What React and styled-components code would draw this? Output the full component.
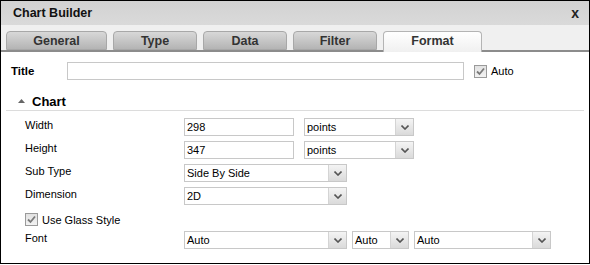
import React from "react";
import styled, { createGlobalStyle } from "styled-components";

const Global = createGlobalStyle`
  html, body { margin: 0; padding: 0; background: #fff; }
  body { font-family: "Liberation Sans", Arial, sans-serif; font-size: 11px; color: #000; }
`;

const Window = styled.div`
  box-sizing: border-box;
  width: 590px;
  height: 264px;
  border: 1px solid #000;
  display: flex;
  flex-direction: column;
  background: #fff;
  overflow: hidden;
`;

const TitleBar = styled.div`
  height: 24px;
  flex: none;
  display: flex;
  align-items: center;
  justify-content: space-between;
  padding: 0 10px 0 12px;
  background: linear-gradient(#d2d2d2, #dadada);
  font-weight: bold;
  font-size: 12.5px;
  color: #111;
`;

const Close = styled.span`
  font-size: 14px;
  font-weight: bold;
  color: #222;
  line-height: 1;
`;

const TabStrip = styled.div`
  height: 27px;
  flex: none;
  display: flex;
  align-items: flex-end;
  gap: 6px;
  padding-left: 5px;
  background: #f0f0f0;
  border-bottom: 2px solid #8c8c8c;
  box-sizing: border-box;
`;

const Tab = styled.div`
  box-sizing: border-box;
  width: ${({ w }) => w}px;
  height: ${({ active }) => (active ? 21 : 19)}px;
  margin-bottom: ${({ active }) => (active ? -2 : 0)}px;
  display: flex;
  align-items: center;
  justify-content: center;
  border: 1px solid ${({ active }) => (active ? "#b4b4b4" : "#a8a8a8")};
  border-bottom: ${({ active }) => (active ? "none" : "1px solid #a8a8a8")};
  border-radius: 4px 4px 0 0;
  background: ${({ active }) =>
    active
      ? "linear-gradient(#ffffff, #f0f0f0)"
      : "linear-gradient(#d8d8d8, #b4b4b4)"};
  font-weight: bold;
  font-size: 12.5px;
  color: #333;
  padding-bottom: ${({ active }) => (active ? 2 : 0)}px;
`;

const Body = styled.div`
  padding: 10px 0 0 9px;
  display: flex;
  flex-direction: column;
`;

const TitleRow = styled.div`
  display: flex;
  align-items: center;
  height: 18px;
`;

const BoldLabel = styled.div`
  width: 56px;
  font-weight: bold;
  font-size: 11.5px;
  padding-left: 1px;
`;

const TextBox = styled.div`
  box-sizing: border-box;
  width: ${({ w }) => w}px;
  height: 18px;
  border: 1px solid #c8c8c8;
  background: #fff;
  display: flex;
  align-items: center;
  padding-left: 2px;
  font-size: 11px;
`;

const CheckWrap = styled.label`
  display: flex;
  align-items: center;
  gap: 4px;
  margin-left: ${({ ml }) => ml || 0}px;
  font-size: 11px;
`;

const Box = styled.span`
  box-sizing: border-box;
  width: 13px;
  height: 13px;
  border: 1px solid #9a9a9a;
  background: linear-gradient(#e2e2e2, #f2f2f2);
  display: flex;
  align-items: center;
  justify-content: center;
`;

const SectionHead = styled.div`
  margin: 12px 5px 0 -4px;
  height: 18px;
  display: flex;
  align-items: center;
  gap: 7px;
  padding-left: 12px;
  border-bottom: 1px solid #dcdcdc;
  font-weight: bold;
  font-size: 13px;
`;

const Rows = styled.div`
  display: flex;
  flex-direction: column;
  gap: 5px;
  padding: 7px 0 0 15px;
`;

const Row = styled.div`
  display: flex;
  align-items: ${({ bottom }) => (bottom ? "flex-end" : "center")};
  height: ${({ h }) => h || 18}px;
`;

const Label = styled.div`
  width: 159px;
  font-size: 11px;
  margin-top: -4px;
`;

const Controls = styled.div`
  display: flex;
  align-items: center;
  gap: ${({ gap }) => gap || 0}px;
`;

const Select = styled.div`
  box-sizing: border-box;
  width: ${({ w }) => w}px;
  height: 18px;
  border: 1px solid #c8c8c8;
  background: #fff;
  display: flex;
  align-items: stretch;
`;

const SelectText = styled.div`
  flex: 1;
  display: flex;
  align-items: center;
  padding-left: 2px;
  font-size: 11px;
`;

const Arrow = styled.div`
  width: 17px;
  border-left: 1px solid #d4d4d4;
  background: linear-gradient(#f4f4f4, #dadada);
  display: flex;
  align-items: center;
  justify-content: center;
`;

const Check = () => (
  <Box>
    <svg width="9" height="9" viewBox="0 0 9 9">
      <path d="M1 4.5 L3.5 7 L8 1.5" fill="none" stroke="#7a7a7a" strokeWidth="1.8" />
    </svg>
  </Box>
);

const Dropdown = ({ w, value }) => (
  <Select w={w}>
    <SelectText>{value}</SelectText>
    <Arrow>
      <svg width="8" height="5" viewBox="0 0 8 5">
        <path d="M0.5 0.5 L4 4 L7.5 0.5" fill="none" stroke="#555" strokeWidth="1.6" />
      </svg>
    </Arrow>
  </Select>
);

const tabs = [
  { name: "General", w: 101 },
  { name: "Type", w: 84 },
  { name: "Data", w: 84 },
  { name: "Filter", w: 84 },
  { name: "Format", w: 99, active: true },
];

export default function App() {
  return (
    <>
      <Global />
      <Window>
        <TitleBar>
          <span>Chart Builder</span>
          <Close>x</Close>
        </TitleBar>
        <TabStrip>
          {tabs.map((t) => (
            <Tab key={t.name} w={t.w} active={t.active}>
              {t.name}
            </Tab>
          ))}
        </TabStrip>
        <Body>
          <TitleRow>
            <BoldLabel>Title</BoldLabel>
            <TextBox w={397} />
            <CheckWrap ml={10}>
              <Check />
              Auto
            </CheckWrap>
          </TitleRow>
          <SectionHead>
            <svg width="7" height="4" viewBox="0 0 7 4">
              <path d="M0 4 L3.5 0 L7 4 Z" fill="#666" />
            </svg>
            Chart
          </SectionHead>
          <Rows>
            <Row>
              <Label>Width</Label>
              <Controls gap={10}>
                <TextBox w={110}>298</TextBox>
                <Dropdown w={110} value="points" />
              </Controls>
            </Row>
            <Row>
              <Label>Height</Label>
              <Controls gap={10}>
                <TextBox w={110}>347</TextBox>
                <Dropdown w={110} value="points" />
              </Controls>
            </Row>
            <Row>
              <Label>Sub Type</Label>
              <Dropdown w={163} value="Side By Side" />
            </Row>
            <Row>
              <Label>Dimension</Label>
              <Dropdown w={163} value="2D" />
            </Row>
            <Row h={16} bottom>
              <CheckWrap>
                <Check />
                Use Glass Style
              </CheckWrap>
            </Row>
            <Row>
              <Label>Font</Label>
              <Controls gap={5}>
                <Dropdown w={163} value="Auto" />
                <Dropdown w={57} value="Auto" />
                <Dropdown w={137} value="Auto" />
              </Controls>
            </Row>
          </Rows>
        </Body>
      </Window>
    </>
  );
}
